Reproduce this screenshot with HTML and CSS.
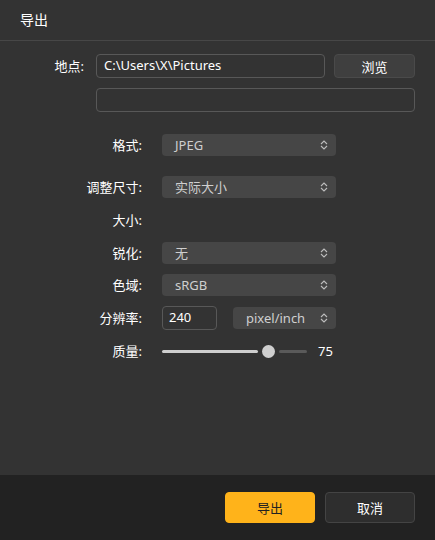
FILE: index.html
```html
<!DOCTYPE html>
<html lang="zh-CN">
<head>
  <meta charset="UTF-8">
  <meta name="viewport" content="width=device-width, initial-scale=1.0">
  <title>导出</title>
  <link rel="stylesheet" href="styles.css">
</head>
<body>
  <div class="dialog">
    <div class="header">导出</div>

    <div class="content">
      <div class="location">
        <label class="label">地点:</label>
        <div class="path-row">
          <div class="input path">C:\Users\X\Pictures</div>
          <button class="btn browse">浏览</button>
        </div>
        <span></span>
        <div class="input name"></div>
      </div>

      <div class="settings">
        <label class="label first">格式:</label>
        <div class="select first">JPEG<span class="chev"></span></div>

        <label class="label">调整尺寸:</label>
        <div class="select">实际大小<span class="chev"></span></div>

        <label class="label">大小:</label>
        <div class="empty"></div>

        <label class="label">锐化:</label>
        <div class="select">无<span class="chev"></span></div>

        <label class="label">色域:</label>
        <div class="select">sRGB<span class="chev"></span></div>

        <label class="label">分辨率:</label>
        <div class="res-row">
          <div class="input res">240</div>
          <div class="select unit">pixel/inch<span class="chev"></span></div>
        </div>

        <label class="label">质量:</label>
        <div class="quality">
          <div class="slider">
            <div class="fill"></div>
            <div class="thumb"></div>
            <div class="rest"></div>
          </div>
          <span class="value">75</span>
        </div>
      </div>
    </div>

    <div class="footer">
      <button class="btn primary">导出</button>
      <button class="btn cancel">取消</button>
    </div>
  </div>
</body>
</html>
```

FILE: styles.css
```css
:root {
  --bg: #333333;
  --footer-bg: #222222;
  --line: #474747;
  --field: #464646;
  --text: #ffffff;
  --text-soft: #cfcfcf;
  --accent: #ffb31a;
}
* { box-sizing: border-box; margin: 0; padding: 0; }
body {
  font-family: 'Noto Sans', 'Noto Sans CJK SC', sans-serif;
  font-size: 13px;
  color: var(--text);
  background: var(--bg);
}
.dialog {
  width: 435px;
  height: 540px;
  display: flex;
  flex-direction: column;
}
.header {
  height: 41px;
  padding: 0 20px;
  font-size: 14px;
  line-height: 40px;
  border-bottom: 1px solid var(--line);
}
.content {
  flex: 1;
  padding-top: 13px;
}
.label {
  text-align: right;
  line-height: 22px;
}
.location {
  display: grid;
  grid-template-columns: 84px 319px;
  column-gap: 12px;
  row-gap: 10px;
  align-items: center;
}
.path-row {
  display: flex;
  gap: 9px;
}
.input {
  height: 24px;
  border: 1px solid #585858;
  border-radius: 4px;
  padding: 0 7px;
  line-height: 21px;
  color: var(--text);
}
.path { flex: 1; }
.btn {
  font-family: inherit;
  font-size: 13px;
  color: var(--text);
  border-radius: 4px;
  cursor: pointer;
}
.browse {
  width: 81px;
  height: 24px;
  background: #3f3f3f;
  border: 1px solid #4a4a4a;
}
.settings {
  margin-top: 22px;
  display: grid;
  grid-template-columns: 142px 174px;
  column-gap: 20px;
  row-gap: 10px;
  align-items: center;
}
.first { margin-bottom: 10px; }
.empty { height: 24px; }
.select {
  position: relative;
  height: 22px;
  background: var(--field);
  border-radius: 4px;
  padding-left: 13px;
  line-height: 22px;
  color: var(--text-soft);
}
.chev {
  position: absolute;
  right: 8px;
  top: 6px;
  width: 8px;
  height: 10px;
  background: no-repeat center / 8px 10px url("data:image/svg+xml,%3Csvg xmlns='http://www.w3.org/2000/svg' width='8' height='10' viewBox='0 0 8 10'%3E%3Cpath d='M1 4L4 1L7 4M1 6L4 9L7 6' fill='none' stroke='%23bdbdbd' stroke-width='1.1'/%3E%3C/svg%3E");
}
.res-row {
  display: flex;
  gap: 16px;
  align-items: center;
}
.res {
  width: 55px;
  padding: 0 6px;
}
.unit {
  flex: 1;
  padding-left: 13px;
}
.quality {
  height: 22px;
  display: flex;
  align-items: center;
  gap: 11px;
}
.slider {
  width: 145px;
  display: flex;
  align-items: center;
  gap: 4px;
}
.fill {
  width: 96px;
  height: 3px;
  border-radius: 2px;
  background: #cfcfcf;
}
.thumb {
  width: 13px;
  height: 13px;
  border-radius: 50%;
  background: #cfcfcf;
}
.rest {
  flex: 1;
  height: 3px;
  border-radius: 2px;
  background: #5a5a5a;
}
.value { font-size: 13px; }
.footer {
  height: 65px;
  background: var(--footer-bg);
  display: flex;
  justify-content: flex-end;
  gap: 10px;
  padding: 17px 20px 0 0;
}
.footer .btn {
  width: 90px;
  height: 31px;
}
.primary {
  background: var(--accent);
  border: 1px solid var(--accent);
  color: #222;
}
.cancel {
  background: #2e2e2e;
  border: 1px solid #444;
}
```
